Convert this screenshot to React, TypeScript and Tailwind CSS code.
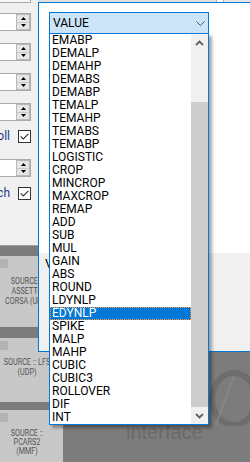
import React from "react";

const ITEMS = [
  "EMABP", "DEMALP", "DEMAHP", "DEMABS", "DEMABP", "TEMALP", "TEMAHP", "TEMABS", "TEMABP",
  "LOGISTIC", "CROP", "MINCROP", "MAXCROP", "REMAP", "ADD", "SUB", "MUL", "GAIN", "ABS",
  "ROUND", "LDYNLP", "EDYNLP", "SPIKE", "MALP", "MAHP", "CUBIC", "CUBIC3", "ROLLOVER", "DIF", "INT",
];

function SpinInput({ className = "" }: { className?: string }) {
  return (
    <div className={"flex h-[18px] w-[31px] justify-end border-y border-r border-[#a9a9a9] bg-white " + className}>
      <div className="flex h-[16px] w-[14px] flex-col border border-[#b9b9b9] bg-[#e5e5e5]">
        <div className="flex flex-1 items-center justify-center border-b border-[#c8c8c8]">
          <svg width="5" height="3" viewBox="0 0 5 3">
            <path d="M2.5 0 L5 3 L0 3Z" fill="#000" />
          </svg>
        </div>
        <div className="flex flex-1 items-center justify-center">
          <svg width="5" height="3" viewBox="0 0 5 3">
            <path d="M0 0 L5 0 L2.5 3Z" fill="#000" />
          </svg>
        </div>
      </div>
    </div>
  );
}

function CheckRow({ label, className = "" }: { label: string; className?: string }) {
  return (
    <div className={"flex h-[13px] w-[31px] items-center justify-end " + className}>
      <span className="mr-[8px] whitespace-nowrap text-[12px] leading-[13px] text-[#24388c]">{label}</span>
      <div className="flex h-[13px] w-[13px] shrink-0 items-center justify-center border border-[#333333] bg-white">
        <svg width="9" height="7" viewBox="0 0 9 7">
          <path d="M0.6 3.4 L3.3 6 L8.4 0.8" stroke="#333" fill="none" strokeWidth="1.1" />
        </svg>
      </div>
    </div>
  );
}

function Node({ top, height, lines, pt, leading }: { top: string; height: string; lines: string[]; pt: string; leading: string }) {
  return (
    <div className={"absolute left-[-9px] w-[72px] bg-[#c8c8c8] " + top + " " + height}>
      <div className="absolute left-[9px] top-[3px] h-[9px] w-[8px] bg-[#b3b3b3]" />
      <div className={"flex scale-x-[0.76] flex-col items-center text-[9.5px] text-[#555555] " + pt + " " + leading}>
        {lines.map((l) => (
          <span key={l} className="whitespace-nowrap">{l}</span>
        ))}
      </div>
    </div>
  );
}

function Chevron({ up }: { up?: boolean }) {
  return (
    <svg width="9" height="6" viewBox="0 0 9 6">
      <path
        d={up ? "M1 5 L4.5 1.5 L8 5" : "M1 1 L4.5 4.5 L8 1"}
        stroke="#606060"
        strokeWidth="1.8"
        fill="none"
      />
    </svg>
  );
}

export default function App() {
  return (
    <div className="relative flex h-[462px] w-[250px] flex-col overflow-hidden bg-[#7c7c7c] font-['Roboto',sans-serif]">
      {/* background settings panel */}
      <div className="flex h-[246px] flex-col border-b border-[#a0a0a0] bg-[#f0f0f0]">
        <div className="flex h-[3px]">
          <div className="w-[31px] border-r border-b border-[#a9a9a9] bg-[#f7f7f7]" />
          <div className="w-[7px]" />
          <div className="w-[179px] border-r border-[#adadad] bg-[#e1e1e1]" />
          <div className="w-[6px] bg-white" />
          <div className="flex-1 border-l border-[#adadad] bg-[#e5e5e5]" />
        </div>
        <div className="flex w-[38px] flex-col items-end pr-[7px]">
          <SpinInput className="mt-[10px]" />
          <SpinInput className="mt-[12px]" />
          <SpinInput className="mt-[12px]" />
          <SpinInput className="mt-[12px]" />
          <CheckRow label="Autoscroll" className="mt-[9px]" />
          <SpinInput className="mt-[16px]" />
          <CheckRow label="Switch" className="mt-[10px]" />
        </div>
      </div>

      {/* node canvas */}
      <div className="relative flex-1">
        <Node top="top-[10px]" height="h-[71px]" pt="pt-[20px]" leading="leading-[10px]" lines={["SOURCE ::", "ASSETTO", "CORSA (UDP)"]} />
        <Node top="top-[92px]" height="h-[64px]" pt="pt-[19px]" leading="leading-[10px]" lines={["SOURCE :: LFS", "(UDP)"]} />
        <Node top="top-[164px]" height="h-[70px]" pt="pt-[18px]" leading="leading-[9px]" lines={["SOURCE ::", "PCARS2", "(MMF)"]} />

        <svg className="absolute left-[200px] top-[100px]" width="50" height="80" viewBox="0 0 50 80">
          <ellipse cx="34" cy="53" rx="22" ry="26" stroke="#6d6d6d" strokeWidth="6" fill="none" />
          <path d="M16 78 L34 30" stroke="#868686" strokeWidth="2" fill="none" />
        </svg>
        <div className="absolute left-[126px] top-[176px] font-['Liberation_Sans',sans-serif] text-[20px] leading-[20px] text-[#6a6a6a]">
          interface
        </div>
      </div>

      {/* dialog window */}
      <div className="absolute left-[38px] top-[2px] flex h-[350px] w-[230px] flex-col border border-[#0078d7] bg-white">
        <div className="h-[250px] pl-[10px] pt-[9px]">
          <div className="flex h-[22px] w-[160px] items-center justify-between border border-[#0078d7] bg-[#cce4f7] pl-[3px] pr-[3px] text-[12px] text-black">
            <span>VALUE</span>
            <svg width="9" height="5" viewBox="0 0 9 5">
              <path d="M0.5 0.5 L4.5 4.5 L8.5 0.5" stroke="#505050" strokeWidth="1" fill="none" />
            </svg>
          </div>
        </div>
        <div className="flex-1 bg-[#f0f0f0] pl-[6px] pt-[3px] text-[13px] leading-[16px] text-black">Value</div>
      </div>

      {/* dropdown list */}
      <div className="absolute left-[49px] top-[33px] flex h-[392px] w-[160px] border border-[#0078d7] bg-white shadow-[3px_3px_3px_rgba(0,0,0,0.35)]">
        <div className="flex w-[141px] flex-col">
          {ITEMS.map((it) => (
            <div
              key={it}
              className={
                "h-[13px] pl-[2px] text-[12px] leading-[13px] " +
                (it === "EDYNLP"
                  ? "bg-[#0078d7] text-white outline-1 outline-dotted -outline-offset-1 outline-[#ff9a40]"
                  : "text-black")
              }
            >
              {it}
            </div>
          ))}
        </div>
        <div className="flex w-[17px] flex-col bg-[#f0f0f0]">
          <div className="flex h-[17px] items-center justify-center">
            <Chevron up />
          </div>
          <div className="flex flex-1 flex-col">
            <div className="h-[51px]" />
            <div className="flex-1 bg-[#cdcdcd]" />
          </div>
          <div className="flex h-[17px] items-center justify-center">
            <Chevron />
          </div>
        </div>
      </div>
    </div>
  );
}
